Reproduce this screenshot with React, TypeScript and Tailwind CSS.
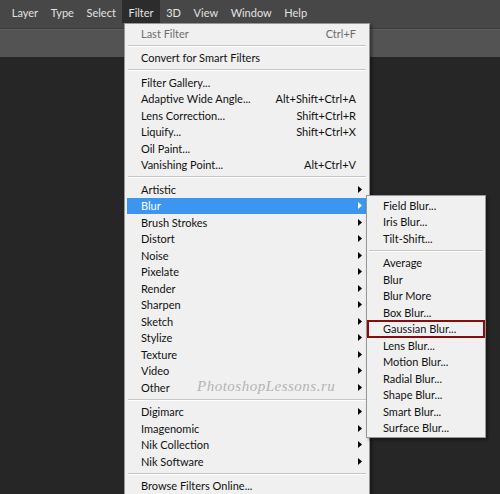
import React from 'react';

type Item =
  | { kind: 'sep' }
  | { kind: 'item'; label: string; shortcut?: string; sub?: boolean; disabled?: boolean; active?: boolean; boxed?: boolean };

const sep: Item = { kind: 'sep' };
const it = (label: string, extra: Partial<Extract<Item, { kind: 'item' }>> = {}): Item => ({ kind: 'item', label, ...extra });

const topMenus = ['Layer', 'Type', 'Select', 'Filter', '3D', 'View', 'Window', 'Help'];

const filterMenu: Item[] = [
  it('Last Filter', { shortcut: 'Ctrl+F', disabled: true }),
  sep,
  it('Convert for Smart Filters'),
  sep,
  it('Filter Gallery...'),
  it('Adaptive Wide Angle...', { shortcut: 'Alt+Shift+Ctrl+A' }),
  it('Lens Correction...', { shortcut: 'Shift+Ctrl+R' }),
  it('Liquify...', { shortcut: 'Shift+Ctrl+X' }),
  it('Oil Paint...'),
  it('Vanishing Point...', { shortcut: 'Alt+Ctrl+V' }),
  sep,
  it('Artistic', { sub: true }),
  it('Blur', { sub: true, active: true }),
  it('Brush Strokes', { sub: true }),
  it('Distort', { sub: true }),
  it('Noise', { sub: true }),
  it('Pixelate', { sub: true }),
  it('Render', { sub: true }),
  it('Sharpen', { sub: true }),
  it('Sketch', { sub: true }),
  it('Stylize', { sub: true }),
  it('Texture', { sub: true }),
  it('Video', { sub: true }),
  it('Other', { sub: true }),
  sep,
  it('Digimarc', { sub: true }),
  it('Imagenomic', { sub: true }),
  it('Nik Collection', { sub: true }),
  it('Nik Software', { sub: true }),
  sep,
  it('Browse Filters Online...'),
];

const blurMenu: Item[] = [
  it('Field Blur...'),
  it('Iris Blur...'),
  it('Tilt-Shift...'),
  sep,
  it('Average'),
  it('Blur'),
  it('Blur More'),
  it('Box Blur...'),
  it('Gaussian Blur...', { boxed: true }),
  it('Lens Blur...'),
  it('Motion Blur...'),
  it('Radial Blur...'),
  it('Shape Blur...'),
  it('Smart Blur...'),
  it('Surface Blur...'),
];

const Arrow = ({ white }: { white?: boolean }) => (
  <svg width="4" height="7" viewBox="0 0 4 7" className={white ? 'fill-white' : 'fill-black'}>
    <path d="M0 0L4 3.5L0 7Z" />
  </svg>
);

function MenuList({ items, pl }: { items: Item[]; pl: string }) {
  return (
    <>
      {items.map((m, i) =>
        m.kind === 'sep' ? (
          <div key={i} className="h-[8px] flex flex-col justify-center px-px">
            <div className="h-px bg-[#c5c5c5]" />
            <div className="h-px bg-white" />
          </div>
        ) : (
          <div
            key={i}
            className={`h-[16.5px] flex items-center pr-[5px] ${pl} ${
              m.active ? 'bg-[#3c95ef] text-white' : m.disabled ? 'text-[#6d6d6d]' : 'text-[#111]'
            } ${m.boxed ? 'outline-2 outline-[#8a0d0d] -outline-offset-1' : ''}`}
          >
            <span className="flex-1 whitespace-nowrap">{m.label}</span>
            {m.shortcut ? <span className="whitespace-nowrap mr-[6px]">{m.shortcut}</span> : null}
            {m.sub ? <Arrow white={m.active} /> : null}
          </div>
        )
      )}
    </>
  );
}

export default function App() {
  return (
    <div
      className="relative w-[500px] h-[494px] overflow-hidden bg-[#262626] text-[11px] leading-none"
      style={{ fontFamily: 'Lato, "Segoe UI", "Open Sans", sans-serif' }}
    >
      <div className="h-[29px] bg-[#474747] flex items-start pl-[5.5px] text-[#e2e2e2] border-b border-[#3a3a3a]">
        {topMenus.map((t) => (
          <div
            key={t}
            className={`h-[23px] pt-[2px] flex items-center px-[6.3px] ${t === 'Filter' ? 'bg-[#2c2c2c]' : ''}`}
          >
            {t}
          </div>
        ))}
      </div>
      <div className="h-[28px] bg-[#535353] border-t border-[#5e5e5e]" />

      {/* Filter menu */}
      <div className="absolute left-[124px] top-[23px] w-[246px] h-[490px] bg-[#f0f0f0] border border-[#979797] px-[2px] pt-[1px] shadow-[2px_2px_3px_rgba(0,0,0,0.4)]">
        <MenuList items={filterMenu} pl="pl-[14px]" />
        <div
          className="absolute left-[72px] top-[355px] text-[#b4b4b4] text-[15px] italic tracking-[0.5px]"
          style={{ fontFamily: '"Liberation Serif", serif' }}
        >
          PhotoshopLessons.ru
        </div>
      </div>

      {/* Blur submenu */}
      <div className="absolute left-[366px] top-[195px] w-[120px] bg-[#f0f0f0] border border-[#979797] py-[1px] px-px shadow-[2px_2px_3px_rgba(0,0,0,0.4)]">
        <MenuList items={blurMenu} pl="pl-[15px]" />
      </div>
    </div>
  );
}
